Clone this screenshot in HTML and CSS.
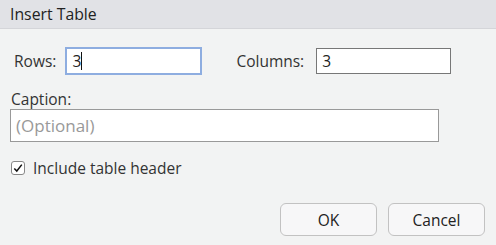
FILE: index.html
```html
<!DOCTYPE html>
<html lang="en">
<head>
    <meta charset="UTF-8">
    <meta name="viewport" content="width=device-width, initial-scale=1.0">
    <title>Insert Table</title>
    <link rel="stylesheet" href="styles.css">
</head>
<body>
    <div class="titlebar">Insert Table</div>
    <form class="dialog" id="tableForm">
        <div class="dims">
            <label for="rows" class="rows-label">Rows:</label>
            <span class="field focused">3<span class="caret"></span></span>
            <label for="cols" class="cols-label">Columns:</label>
            <input type="text" id="cols" class="field" value="3">
        </div>

        <label for="caption" class="caption-label">Caption:</label>
        <input type="text" id="caption" class="caption" placeholder="(Optional)">

        <label class="check">
            <span class="box">
                <svg width="10" height="10" viewBox="0 0 10 10"><path d="M1.3 5.4 L3.8 8 L8.8 1.6" fill="none" stroke="#111" stroke-width="1.5"/></svg>
            </span>
            Include table header
        </label>

        <div class="buttons">
            <button type="button">OK</button>
            <button type="button">Cancel</button>
        </div>
    </form>
</body>
</html>
```

FILE: styles.css
```css
body {
    margin: 0;
    background-color: #f2f3f3;
    font-family: 'Open Sans', sans-serif;
    font-size: 15.5px;
    color: #333;
}
.titlebar {
    height: 28px;
    line-height: 28px;
    padding: 0 10px;
    background-color: #e1e2e6;
    border-bottom: 1px solid #d4d5d9;
    font-size: 15.8px;
    color: #222;
}
.dialog {
    padding: 19px 11px 0 11px;
}
.dims {
    display: flex;
    align-items: center;
    height: 26px;
}
.rows-label {
    margin-left: 3px;
}
.field {
    box-sizing: border-box;
    width: 135px;
    height: 26px;
    border: 1px solid #777;
    background: white;
    padding: 0 5px;
    font-family: inherit;
    font-size: 15.5px;
    color: #222;
    margin: 0;
    outline: none;
}
span.field {
    display: flex;
    align-items: center;
    margin-left: 10px;
}
.focused {
    border-color: #8eade0;
    box-shadow: 0 0 0 1px #8eade0;
}
.caret {
    width: 1px;
    height: 18px;
    background: #111;
}
.cols-label {
    margin-left: 35px;
}
#cols {
    margin-left: 12px;
}
.caption-label {
    display: block;
    margin-top: 14px;
}
.caption {
    display: block;
    box-sizing: border-box;
    width: 429px;
    height: 33px;
    margin: -1px 0 0 -1px;
    border: 1px solid #999;
    background: white;
    padding: 0 5px;
    font-family: inherit;
    font-size: 17px;
    outline: none;
}
.caption::placeholder {
    color: #999;
}
.check {
    display: flex;
    align-items: center;
    margin-top: 15px;
    color: #333;
}
.box {
    box-sizing: border-box;
    width: 14px;
    height: 14px;
    border: 1px solid #888;
    border-radius: 3px;
    background: white;
    display: flex;
    align-items: center;
    justify-content: center;
    margin-right: 8px;
}
.buttons {
    display: flex;
    justify-content: flex-end;
    gap: 11px;
    margin-top: 24px;
}
button {
    box-sizing: border-box;
    width: 97px;
    height: 33px;
    background-color: #f7f7f8;
    border: 1px solid #c2c2c2;
    border-radius: 6px;
    font-family: inherit;
    font-size: 15.5px;
    color: #222;
}
```
